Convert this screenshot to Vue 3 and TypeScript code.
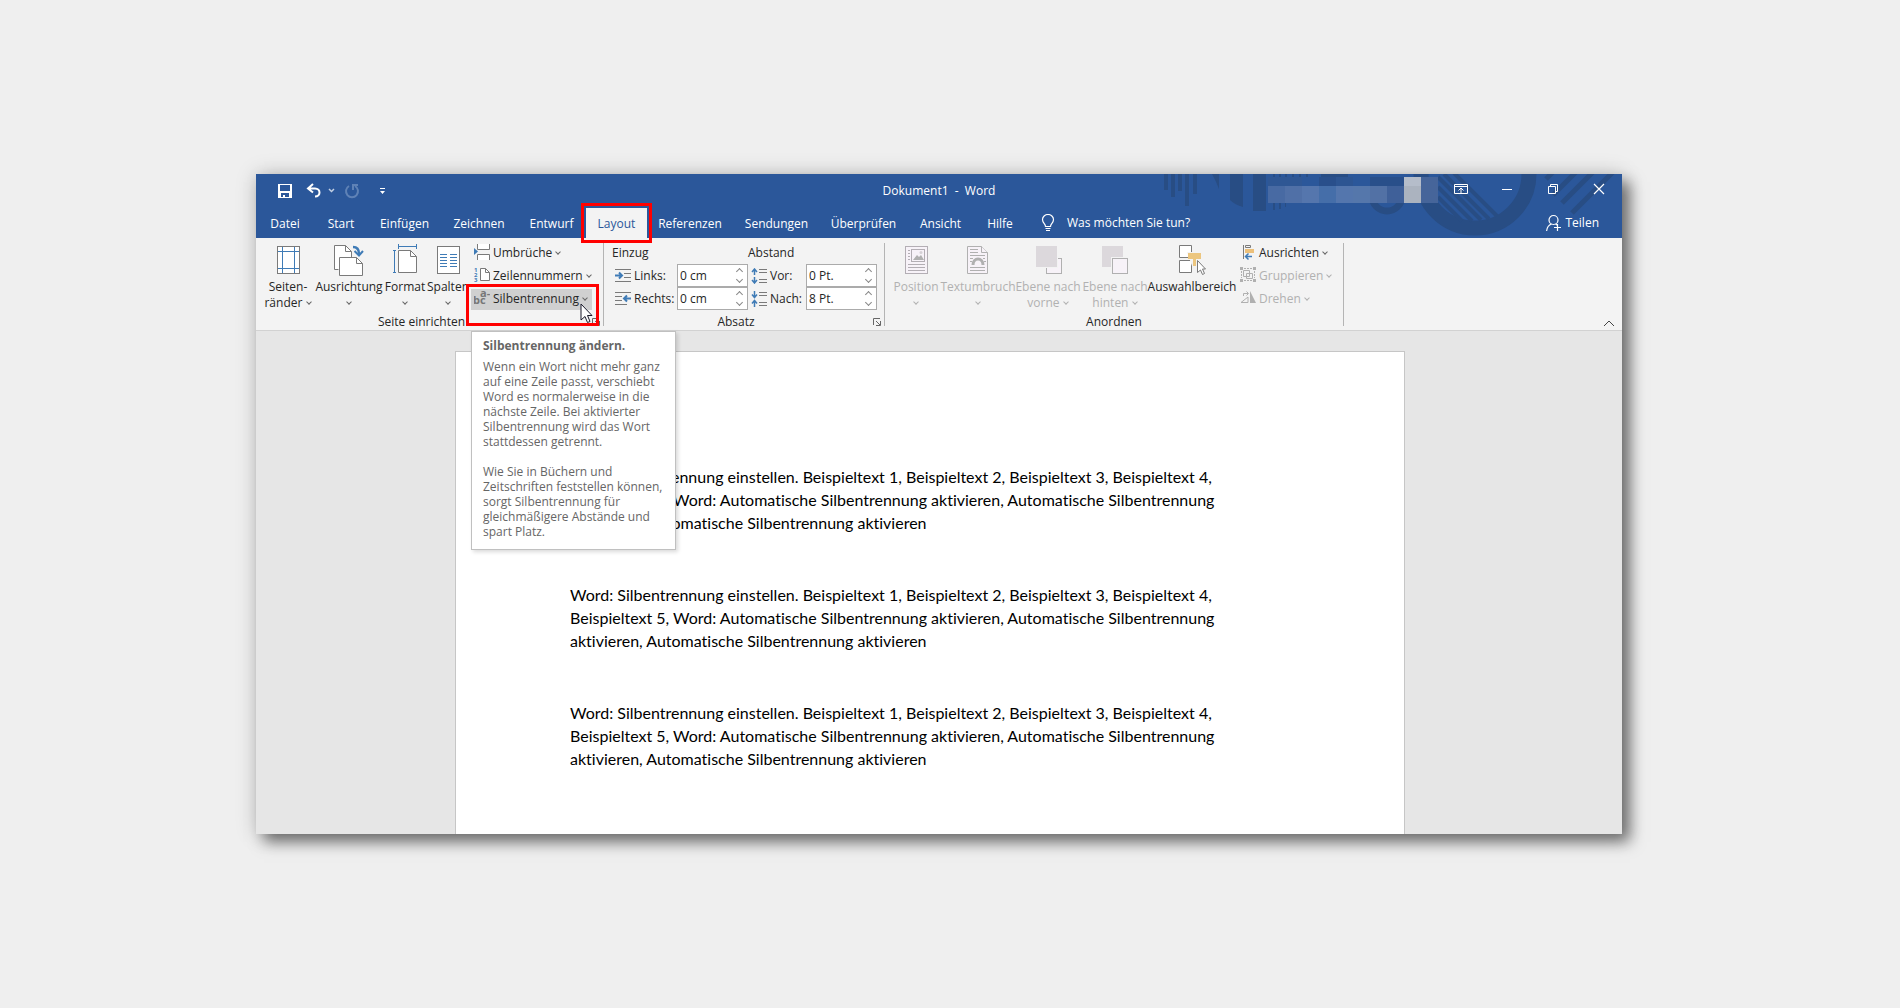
<script setup lang="ts">
import { ref } from 'vue'

const tabs = ['Datei', 'Start', 'Einfügen', 'Zeichnen', 'Entwurf', 'Layout', 'Referenzen', 'Sendungen', 'Überprüfen', 'Ansicht', 'Hilfe']
const activeTab = ref('Layout')

const indentLeft = ref('0 cm')
const indentRight = ref('0 cm')
const spaceBefore = ref('0 Pt.')
const spaceAfter = ref('8 Pt.')

const sample = [
  'Word: Silbentrennung einstellen. Beispieltext 1, Beispieltext 2, Beispieltext 3, Beispieltext 4,',
  'Beispieltext 5, Word: Automatische Silbentrennung aktivieren, Automatische Silbentrennung',
  'aktivieren, Automatische Silbentrennung aktivieren',
].join('\n')
const paragraphs = [sample, sample, sample]

const tipFirst = [
  'Wenn ein Wort nicht mehr ganz',
  'auf eine Zeile passt, verschiebt',
  'Word es normalerweise in die',
  'nächste Zeile. Bei aktivierter',
  'Silbentrennung wird das Wort',
  'stattdessen getrennt.',
].join('\n')
const tipSecond = [
  'Wie Sie in Büchern und',
  'Zeitschriften feststellen können,',
  'sorgt Silbentrennung für',
  'gleichmäßigere Abstände und',
  'spart Platz.',
].join('\n')

const blurTop = ['#2f5794', '#2f5794', '#2b579a', '#294f8b', '#2d5592', '#2b579a', '#294f8a', '#294f8a']
const blurBottom = ['#486aa3', '#5070a7', '#5576ad', '#456ea9', '#5476ad', '#5577ab', '#5271a5', '#3f6099']
</script>

<template>
  <main class="window">
    <header class="head">
      <svg class="deco" width="462" height="64" viewBox="1160 174 462 64" aria-hidden="true">
        <g fill="#284d84">
          <path d="M1164 174h4v16h-4zM1171 174h4v23h-4zM1178 174h4v17h-4zM1185 174h4v32h-4zM1193 174h4v20h-4z" />
          <path d="M1212 174h7v15q-3-8-7-15zM1230 174h13v33q-8-2-13-7zM1253 174h13v37h-13z" />
          <path d="M1273 174h2v3h-2zM1279 174h2v3h-2zM1285 174h2v3h-2zM1292 174h2v3h-2zM1299 174h2v3h-2zM1306 174h2v3h-2zM1321 174h27v3h-27z" />
          <path d="M1273 203h2v7h-2zM1279 203h2v6h-2zM1285 203h1v4h-1z" />
        </g>
        <g fill="none" stroke="#284d84">
          <circle cx="1387" cy="196" r="15" stroke-width="7" />
          <circle cx="1475" cy="174" r="54" stroke-width="15" />
          <path stroke-width="4" d="M1438 197l24 24M1438 187l34 34M1438 177l43 43M1444 174l45 45M1454 173l43 43" />
          <path stroke-width="5" d="M1546 179l7-7M1553 195l23-23M1562 203l31-31M1572 213l42-42" />
        </g>
        <g shape-rendering="crispEdges">
          <rect v-for="(c, i) in blurTop" :key="'t' + i" :x="1268 + i * 17" y="177" width="17" height="9" :fill="c" />
          <rect v-for="(c, i) in blurBottom" :key="'b' + i" :x="1268 + i * 17" y="186" width="17" height="17" :fill="c" />
          <rect x="1404" y="177" width="17" height="9" fill="#b5bdca" />
          <rect x="1404" y="186" width="17" height="17" fill="#abb3bf" />
          <rect x="1421" y="177" width="17" height="26" fill="#46659a" />
        </g>
      </svg>

      <div class="titlebar">
        <div class="quick">
          <button type="button" aria-label="Speichern">
            <svg width="16" height="16" viewBox="0 0 16 16"><path fill="#fff" fill-rule="evenodd" d="M1 1h14v14H1zM3 2v6h10V2zM4 10v4h2v-2h2v2h4v-4z" /></svg>
          </button>
          <button type="button" class="undo" aria-label="Rückgängig">
            <svg width="30" height="16" viewBox="0 0 30 16" fill="none" stroke="#fff"><path stroke-width="2" d="M7 1L2 5.500l5 4M2 5.500h7c6 0 6 8 0 8" /><path stroke="#c3d0e4" stroke-width="1.500" d="M23 6l2.500 2.500L28 6" /></svg>
          </button>
          <button type="button" class="redo" aria-label="Wiederholen">
            <svg width="16" height="16" viewBox="0 0 16 16" fill="none" stroke="#5f82b6" stroke-width="2"><path d="M5 3a6 6 0 1 0 6 0M9 7V2h5" /></svg>
          </button>
          <button type="button" class="more" aria-label="Symbolleiste anpassen">
            <svg width="7" height="8" viewBox="0 0 7 8" fill="#fff"><path d="M1 1h5v1H1zM1 4h5L3.500 7z" /></svg>
          </button>
        </div>
        <h1>Dokument1&nbsp; -&nbsp; Word</h1>
        <div class="controls">
          <button type="button" aria-label="Menüband-Anzeigeoptionen">
            <svg width="14" height="12" viewBox="0 0 14 12" fill="none" stroke="#fff"><path d="M.5 1.500h13v9H.5zM.5 3.500h13M7 10V5.500M4.500 7.500L7 5l2.500 2.500" /></svg>
          </button>
          <button type="button" aria-label="Minimieren">
            <svg width="12" height="12" viewBox="0 0 12 12" stroke="#fff"><path d="M1 6.500h10" /></svg>
          </button>
          <button type="button" aria-label="Verkleinern">
            <svg width="12" height="12" viewBox="0 0 12 12" fill="none" stroke="#fff"><path d="M1.500 3.500h7v7h-7zM3.500 3V1.500h7v7H9" /></svg>
          </button>
          <button type="button" aria-label="Schließen">
            <svg width="12" height="12" viewBox="0 0 12 12" stroke="#fff" stroke-width="1.200"><path d="M1 1l10 10M11 1L1 11" /></svg>
          </button>
        </div>
      </div>

      <div class="tabrow">
        <nav class="tabs">
          <button v-for="tab in tabs" :key="tab" type="button" class="tab" :class="{ active: tab === activeTab }" @click="activeTab = tab">
            {{ tab }}<span v-if="tab === 'Layout'" class="mark"></span>
          </button>
        </nav>
        <button type="button" class="ask">
          <svg width="14" height="18" viewBox="0 0 14 18" fill="none" stroke="#fff" stroke-width="1.200"><path d="M4.500 12.500c0-3-3-3.500-3-7a5.500 5 0 0 1 11 0c0 3.500-3 4-3 7zM4.500 14.500h5M5 16.500h4" /></svg>
          Was möchten Sie tun?
        </button>
        <button type="button" class="share">
          <svg width="16" height="18" viewBox="0 0 16 18" fill="none" stroke="#fff" stroke-width="1.200"><circle cx="7.500" cy="6" r="4.500" /><path d="M.600 17c.4-4 2-6 5-7M9.500 10l1.500 1M8 13.500h7M11.500 10v7" /></svg>
          Teilen
        </button>
      </div>
    </header>

    <section class="ribbon">
      <div class="group setup">
        <div class="body">
          <button type="button" class="big">
            <svg width="36" height="36" viewBox="0 0 36 36" fill="none" shape-rendering="crispEdges"><rect x="7.500" y="3.500" width="22" height="27" fill="#fff" stroke="#7a7a7a" /><path stroke="#3f7bb6" d="M12.500 4v26M24.500 4v26M8 8.500h21M8 25.500h21" /></svg>
            <span>Seiten-<br />ränder <i class="chev"></i></span>
          </button>
          <button type="button" class="big">
            <svg width="36" height="36" viewBox="0 0 36 36" stroke="#7a7a7a" fill="#fff"><path d="M7.500 26.500h-4v-24h11l6 6v6" /><path fill="none" d="M14.500 2.500v6h6" /><path d="M8.500 14.500h17l6 6v12h-23z" /><path fill="none" d="M25.500 14.500v6h6" /><path fill="none" stroke="#3f7bb6" stroke-width="2.500" d="M22 4c4 0 6 2 6 7" /><path fill="none" stroke="#3f7bb6" stroke-width="2" d="M23.500 8l4.500 4.500L32 8" /></svg>
            <span>Ausrichtung<br /><i class="chev"></i></span>
          </button>
          <button type="button" class="big">
            <svg width="36" height="36" viewBox="0 0 36 36" stroke="#7a7a7a" fill="#fff"><path d="M11.500 7.500h12l6 6v16h-18z" /><path fill="none" d="M23.500 7.500v6h6" /><path fill="none" stroke="#3f7bb6" d="M11.500 1v5M29.500 1v5M12 3.500h17M6 7.500h3M6 29.500h3M7.500 8v21" /></svg>
            <span>Format<br /><i class="chev"></i></span>
          </button>
          <button type="button" class="big">
            <svg width="36" height="36" viewBox="0 0 36 36" fill="#fff" shape-rendering="crispEdges"><rect x="7.500" y="3.500" width="22" height="27" stroke="#7a7a7a" /><path stroke="#3f7bb6" d="M10 11.500h7M20 11.500h7M10 14.500h7M20 14.500h7M10 17.500h7M20 17.500h7M10 20.500h7M20 20.500h7M10 23.500h7M20 23.500h7" /></svg>
            <span>Spalten<br /><i class="chev"></i></span>
          </button>
          <div class="stack">
            <button type="button" class="small">
              <svg width="16" height="21" viewBox="0 0 16 21" fill="#fff" stroke="#7a7a7a"><path d="M3.500 1v5.500h12V1M3.500 17v-5.500h12V17" /><path fill="#3f7bb6" stroke="none" d="M0 5l4 3.500L0 12z" /></svg>
              Umbrüche <i class="chev"></i>
            </button>
            <button type="button" class="small">
              <svg width="16" height="21" viewBox="0 0 16 21" fill="#fff" stroke="#7a7a7a"><path d="M6.500 2.500h5l4 4v8h-9z" /><path fill="none" d="M11.500 2.500v4h4" /><g fill="#3f7bb6" stroke="none" font-size="6" font-weight="700"><text x="0" y="6">1</text><text x="0" y="11">2</text><text x="0" y="16">3</text></g></svg>
              Zeilennummern <i class="chev"></i>
            </button>
            <div class="anchor">
              <button type="button" class="small hover">
                <svg width="16" height="21" viewBox="0 0 16 21" fill="#777" font-weight="700" font-size="11"><text x="-1" y="15">bc</text><text x="6" y="8">a-</text></svg>
                Silbentrennung <i class="chev"></i>
              </button>
              <span class="frame"></span>
              <svg class="cursor" width="14" height="21" viewBox="0 0 14 21"><path fill="#fff" stroke="#1b1b2b" d="M1 1v16l4-3.500 2.500 6 2.500-1-2.500-6H12z" /></svg>
              <div class="tip" role="tooltip">
                <strong>Silbentrennung ändern.</strong>
                <p>{{ tipFirst }}</p>
                <p>{{ tipSecond }}</p>
              </div>
            </div>
          </div>
        </div>
        <footer>Seite einrichten
          <button type="button" class="launch" aria-label="Seite einrichten öffnen"><svg width="8" height="8" viewBox="0 0 8 8" fill="none" stroke="#666"><path d="M.5 7V.5H7M3 3l4 4M7.500 3v4.500H3" /></svg></button>
        </footer>
      </div>

      <div class="group spacing">
        <div class="fields">
          <span class="caption">Einzug</span>
          <span class="caption">Abstand</span>
          <label for="il"><svg width="16" height="13" viewBox="0 0 16 13" stroke="#7a7a7a"><path d="M0 .5h16M9 4.500h7M9 8.500h7M0 12.500h16" /><path fill="none" stroke="#3f7bb6" stroke-width="2" d="M0 6.500h6M4 3.500l3 3-3 3" /></svg>Links:</label>
          <div class="spin"><input id="il" v-model="indentLeft" type="text" /><button type="button" aria-label="Links mehr"><i class="up"></i></button><button type="button" aria-label="Links weniger"><i class="down"></i></button></div>
          <label for="sb"><svg width="16" height="16" viewBox="0 0 16 16" stroke="#7a7a7a"><path d="M8 1.500h8M8 4.500h8M8 11.500h8M8 14.500h8" /><path fill="none" stroke="#3f7bb6" stroke-width="1.500" d="M3.500 7V1.500M1 4l2.500-3L6 4M3.500 9v5.500M1 12l2.500 3L6 12" /></svg>Vor:</label>
          <div class="spin"><input id="sb" v-model="spaceBefore" type="text" /><button type="button" aria-label="Vor mehr"><i class="up"></i></button><button type="button" aria-label="Vor weniger"><i class="down"></i></button></div>
          <label for="ir"><svg width="16" height="13" viewBox="0 0 16 13" stroke="#7a7a7a"><path d="M0 .5h16M0 4.500h7M0 8.500h7M0 12.500h12" /><path fill="none" stroke="#3f7bb6" stroke-width="2" d="M16 6.500h-6M12 3.500l-3 3 3 3" /></svg>Rechts:</label>
          <div class="spin"><input id="ir" v-model="indentRight" type="text" /><button type="button" aria-label="Rechts mehr"><i class="up"></i></button><button type="button" aria-label="Rechts weniger"><i class="down"></i></button></div>
          <label for="sa"><svg width="16" height="16" viewBox="0 0 16 16" stroke="#7a7a7a"><path d="M8 1.500h8M8 4.500h8M8 11.500h8M8 14.500h8" /><path fill="none" stroke="#3f7bb6" stroke-width="1.500" d="M3.500 0v6M1 3.500l2.500 3 2.500-3M3.500 16v-6M1 12.500l2.500-3 2.500 3" /></svg>Nach:</label>
          <div class="spin"><input id="sa" v-model="spaceAfter" type="text" /><button type="button" aria-label="Nach mehr"><i class="up"></i></button><button type="button" aria-label="Nach weniger"><i class="down"></i></button></div>
        </div>
        <footer>Absatz
          <button type="button" class="launch" aria-label="Absatz öffnen"><svg width="8" height="8" viewBox="0 0 8 8" fill="none" stroke="#666"><path d="M.5 7V.5H7M3 3l4 4M7.500 3v4.500H3" /></svg></button>
        </footer>
      </div>

      <div class="group arrange">
        <div class="body">
          <button type="button" class="big" disabled>
            <svg width="36" height="36" viewBox="-1 0 36 36" fill="#f7f2f8" stroke="#b3aeb4"><rect x="6.500" y="3.500" width="22" height="27" /><path d="M9 7.500h2M9 10.500h2M9 13.500h2M9 16.500h2M9 21.500h17M9 24.500h17M9 27.500h17" /><rect x="12.500" y="6.500" width="13" height="12" /><path fill="#b0b0b0" stroke="none" d="M14 17l4-5 2 2 2-2 3 5z" /><circle cx="22" cy="9.500" r="1.500" fill="#d5d0d5" stroke="none" /></svg>
            <span>Position<br /><i class="chev"></i></span>
          </button>
          <button type="button" class="big" disabled>
            <svg width="36" height="36" viewBox="0 0 36 36" fill="#f7f2f8" stroke="#b0b0b0"><path d="M7.500 3.500h14l6 6v21h-20z" /><path d="M21.500 3.500v6h6M10 6.500h8M10 9.500h8M10 12.500h15M10 15.500h3M23 15.500h2M10 18.500h2M24 18.500h2M10 24.500h15M10 27.500h15" /><path fill="none" stroke-width="3" d="M13 22c0-8 10-8 10 0" /></svg>
            <span>Textumbruch<br /><i class="chev"></i></span>
          </button>
          <button type="button" class="big" disabled>
            <svg width="36" height="36" viewBox="0 0 36 36"><rect x="16.500" y="15.500" width="15" height="15" fill="#f7f2f8" stroke="#b0b0b0" /><path fill="#f3f3f3" d="M6 3h22v22H6z" /><path fill="#dcd8dc" d="M6 3h21v21H6z" /></svg>
            <span>Ebene nach<br />vorne <i class="chev"></i></span>
          </button>
          <button type="button" class="big" disabled>
            <svg width="36" height="36" viewBox="0 0 36 36"><path fill="#dcd8dc" d="M5 3h21v21H5z" /><path fill="#f3f3f3" d="M14 14h18v18H14z" /><rect x="15.500" y="15.500" width="15" height="15" fill="#f7f2f8" stroke="#b0b0b0" /></svg>
            <span>Ebene nach<br />hinten <i class="chev"></i></span>
          </button>
          <button type="button" class="big">
            <svg width="36" height="36" viewBox="0 0 36 36" fill="#fff" stroke="#7a7a7a"><path d="M5.500 2.500h12v12h-12zM5.500 17.500h12v12h-12z" /><path fill="#f3f3f3" stroke="none" d="M13 9h15v14H18z" /><path fill="#ecc67f" stroke="none" d="M14 10h13v6H14zM19 16h8v7h-8z" /><path fill="#f3f3f3" stroke="none" d="M22 16h6v8h-6z" /><path d="M23.500 17.500v12l3-2.500 2 4.500 2-1-2-4.500h3z" /></svg>
            <span>Auswahlbereich</span>
          </button>
          <div class="stack">
            <button type="button" class="small">
              <svg width="16" height="21" viewBox="0 0 16 21" fill="none"><path stroke="#7a7a7a" d="M3.500 2v14M5.500 2.500h5v2h-5z" /><path fill="#ecc07a" d="M5 6h9v4H5z" /><path stroke="#3f7bb6" stroke-width="1.500" d="M12 13.500H6M8.500 10.500l-3 3 3 3" /></svg>
              Ausrichten <i class="chev"></i>
            </button>
            <button type="button" class="small" disabled>
              <svg width="16" height="21" viewBox="0 0 16 21" fill="none" stroke="#b0b0b0"><path fill="#b0b0b0" stroke="none" d="M0 1h3v3H0zM13 1h3v3h-3zM0 13h3v3H0zM13 13h3v3h-3z" /><path stroke-dasharray="2 1" d="M4 2.500h8M4 14.500h8M1.500 5v7M14.500 5v7" /><path d="M3.500 4.500h6v6h-6zM6.500 7.500h6v5h-6z" /></svg>
              Gruppieren <i class="chev"></i>
            </button>
            <button type="button" class="small" disabled>
              <svg width="16" height="21" viewBox="0 0 16 21" fill="none" stroke="#b0b0b0"><path d="M1 13.500h7V8zM3.500 7V4.500H8M6.500 2.500l2 2-2 2" /><path fill="#b0b0b0" stroke="none" d="M10 2l6 12h-6z" /></svg>
              Drehen <i class="chev"></i>
            </button>
          </div>
        </div>
        <footer>Anordnen</footer>
      </div>
      <button type="button" class="collapse" aria-label="Menüband reduzieren">
        <svg width="12" height="7" viewBox="0 0 12 7" fill="none" stroke="#444"><path d="M1 6l5-5 5 5" /></svg>
      </button>
    </section>

    <section class="canvas">
      <article class="page">
        <p v-for="(text, i) in paragraphs" :key="i">{{ text }}</p>
      </article>
    </section>
  </main>
</template>

<style>
body {
  margin: 0;
  background: #efefef;
}
</style>

<style scoped>
* {
  box-sizing: border-box;
}
.window {
  margin: 174px 278px 174px 256px;
  font: 12px/16px "Open Sans", "Noto Sans", sans-serif;
  color: #262626;
  background: #e6e6e6;
  box-shadow: 8px 8px 14px rgba(0, 0, 0, 0.5), 0 0 20px rgba(0, 0, 0, 0.18);
}
button {
  display: flex;
  align-items: center;
  padding: 0;
  border: 0;
  background: none;
  color: inherit;
  font: inherit;
  white-space: nowrap;
}
svg {
  flex: none;
  display: block;
}
.head {
  position: relative;
  background: #2b579a;
  color: #fff;
}
.deco {
  position: absolute;
  top: 0;
  right: 0;
}
.titlebar {
  position: relative;
  display: grid;
  grid-template-columns: 1fr auto 1fr;
  align-items: center;
  height: 34px;
}
.quick {
  display: flex;
  align-items: center;
  padding-left: 21px;
}
.undo {
  margin-left: 13px;
}
.redo {
  margin-left: 8px;
}
.more {
  margin-left: 19px;
}
h1 {
  margin: 0;
  font-size: 12px;
  font-weight: 400;
}
.controls {
  display: flex;
  justify-content: flex-end;
  height: 30px;
  align-self: start;
}
.controls button {
  width: 46px;
  justify-content: center;
}
.tabrow {
  position: relative;
  display: flex;
  align-items: stretch;
  height: 30px;
}
.tabs {
  display: grid;
  grid-template-columns: 58px 54px 73px 76px 69px 61px 86px 87px 87px 67px 52px;
}
.tab {
  position: relative;
  justify-content: center;
  padding-top: 2px;
}
.tab.active {
  background: #f3f3f3;
  color: #2b579a;
}
.mark {
  position: absolute;
  z-index: 2;
  inset: -5px;
  border: 3px solid #f00;
}
.ask {
  gap: 12px;
  margin-left: 15px;
}
.share {
  gap: 3px;
  margin-left: auto;
  margin-right: 23px;
}
.ribbon {
  position: relative;
  display: flex;
  height: 93px;
  padding: 5px 0 4px;
  background: #f3f3f3;
  border-bottom: 1px solid #d2d2d2;
}
.group {
  display: flex;
  flex-direction: column;
  justify-content: space-between;
  border-right: 1px solid #b4b4b4;
}
.setup {
  width: 348px;
}
.spacing {
  width: 281px;
}
.arrange {
  width: 459px;
}
.setup .body {
  display: grid;
  grid-template-columns: 52px 70px 42px 44px 122px;
  padding-left: 6px;
}
.arrange .body {
  display: grid;
  grid-template-columns: 52px 72px 68px 66px 88px auto;
  padding-left: 5px;
}
.big {
  flex-direction: column;
  justify-content: flex-start;
  min-width: 0;
  text-align: center;
}
button:disabled {
  color: #b1b1b1;
}
.stack {
  display: flex;
  flex-direction: column;
  gap: 2px;
  padding-left: 1px;
}
.small {
  gap: 3px;
  width: 121px;
  height: 21px;
  padding: 0 0 1px 3px;
}
.hover {
  background: #d0d0d0;
}
.chev,
.up,
.down {
  display: inline-block;
  flex: none;
  width: 4px;
  height: 4px;
  border: solid #666;
  border-width: 0 1px 1px 0;
  transform: rotate(45deg);
  margin: 0 1px 3px;
}
button:disabled .chev {
  border-color: #b1b1b1;
}
.up,
.down {
  width: 5px;
  height: 5px;
  border-color: #888;
}
.up {
  transform: rotate(225deg);
  margin: 3px 0 0;
}
.anchor {
  position: relative;
}
.frame {
  position: absolute;
  z-index: 2;
  inset: -5px -7px -16px -5px;
  border: 3px solid #f00;
}
.cursor {
  position: absolute;
  z-index: 4;
  left: 109px;
  top: 14px;
}
.tip {
  position: absolute;
  z-index: 3;
  left: 0;
  top: 42px;
  width: 205px;
  height: 219px;
  padding: 6px 11px;
  background: #fff;
  border: 1px solid #c0c0c0;
  box-shadow: 2px 2px 4px rgba(0, 0, 0, 0.15);
  color: #666;
  white-space: pre-line;
  line-height: 15px;
}
.tip strong {
  display: block;
  margin-bottom: 6px;
}
.tip p {
  margin: 0 0 15px;
}
footer {
  position: relative;
  line-height: 8px;
  padding-right: 16px;
  text-align: center;
}
.arrange footer {
  padding-right: 0;
}
.launch {
  position: absolute;
  right: 3px;
  bottom: 0;
}
.fields {
  display: grid;
  grid-template-columns: 65px 71px 58px 71px;
  grid-template-rows: 21px 23px 23px;
  padding-left: 8px;
}
.caption {
  grid-column: span 2;
  line-height: 20px;
}
label {
  display: flex;
  align-items: center;
  gap: 3px;
  padding-left: 3px;
}
.spin {
  display: grid;
  grid-template: 1fr 1fr / 1fr 16px;
  border: 1px solid #ababab;
  background: #fff;
}
.spin input {
  grid-row: span 2;
  width: 100%;
  min-width: 0;
  padding: 0 2px;
  border: 0;
  background: none;
  color: inherit;
  font: inherit;
}
.spin button {
  justify-content: center;
}
.collapse {
  position: absolute;
  right: 7px;
  bottom: 3px;
}
.canvas {
  padding: 20px 217px 0 199px;
}
.page {
  min-height: 483px;
  padding: 113px 114px 0;
  background: #fff;
  border: 1px solid #c6c6c6;
  border-bottom: 0;
  color: #000;
  font: 16px/23px Lato, Carlito, sans-serif;
  font-variant-ligatures: none;
  white-space: pre;
}
.page p {
  margin: 0 0 49px;
}
</style>
